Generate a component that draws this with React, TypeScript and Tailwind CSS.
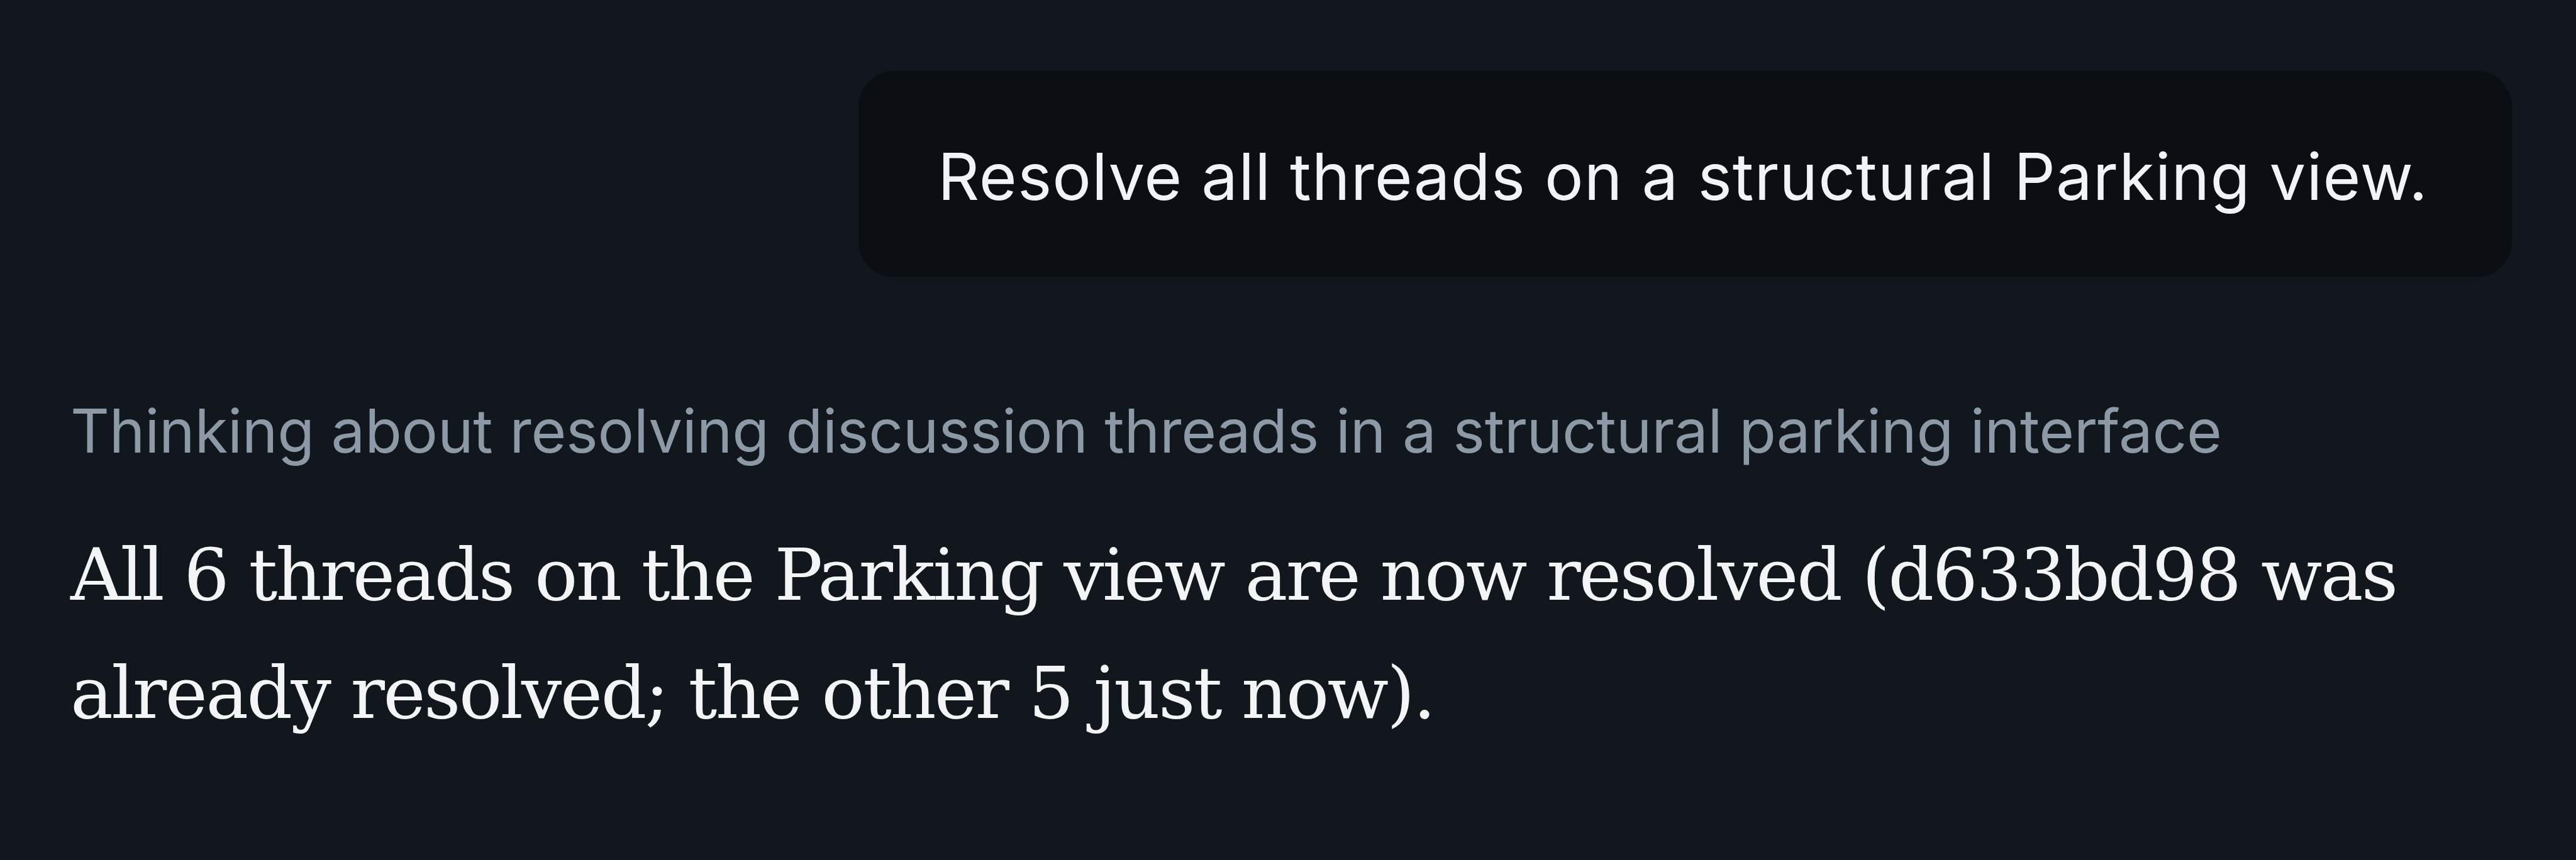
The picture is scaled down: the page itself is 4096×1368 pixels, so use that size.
export default function App() {
  return (
    <div className="min-h-[1368px] w-full bg-[#12161d] pl-[112px] pr-[102px] pt-[113px]">
      <div className="flex justify-end">
        <div className="rounded-[56px] bg-[#0b0e13] pl-[126px] pr-[133px] pt-[91px] pb-[82px]">
          <p className="font-['Inter',sans-serif] text-[103px] leading-[1.5] tracking-[1px] text-[#f1f3f6]">
            Resolve all threads on a structural Parking view.
          </p>
        </div>
      </div>

      <div className="mt-[177px] font-['Inter',sans-serif] text-[96px] leading-[1.4] tracking-[-0.3px] text-[#8e99a8]">
        Thinking about resolving discussion threads in a structural parking interface
      </div>

      <p className="mt-[69px] font-['DejaVu_Serif',serif] text-[114px] leading-[188px] tracking-[-2.8px] text-[#f3f4f6]">
        All 6 threads on the Parking view are now resolved (d633bd98 was already resolved; the other 5 just now).
      </p>
    </div>
  )
}
